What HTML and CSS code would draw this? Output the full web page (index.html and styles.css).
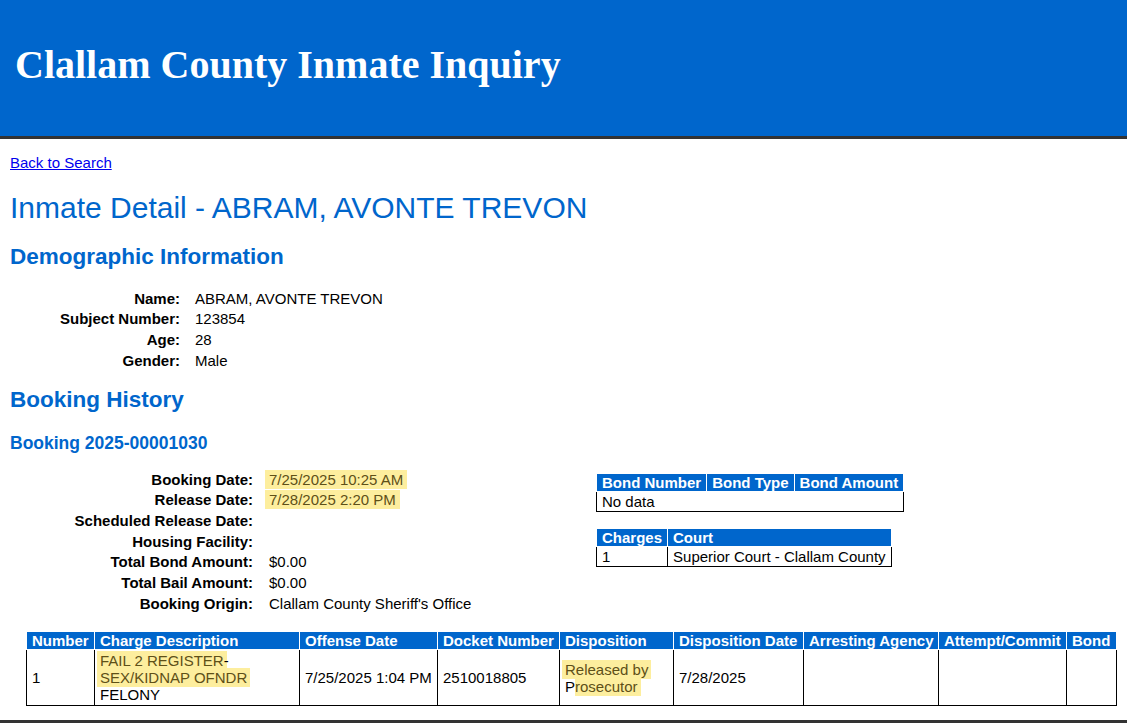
FILE: index.html
```html
<!DOCTYPE html>
<html lang="en">
<head>
    <meta charset="UTF-8">
    <meta name="viewport" content="width=device-width, initial-scale=1.0">
    <title>Clallam County Inmate Inquiry</title>
    <link rel="stylesheet" href="styles.css">
</head>
<body>
    <header class="site-header">
        <h1>Clallam County Inmate Inquiry</h1>
    </header>

    <main class="content">
        <p class="back"><a href="#">Back to Search</a></p>

        <h1 class="page-title">Inmate Detail - ABRAM, AVONTE TREVON</h1>

        <h2 class="section-title">Demographic Information</h2>
        <dl class="info info-demo">
            <dt>Name:</dt><dd>ABRAM, AVONTE TREVON</dd>
            <dt>Subject Number:</dt><dd>123854</dd>
            <dt>Age:</dt><dd>28</dd>
            <dt>Gender:</dt><dd>Male</dd>
        </dl>

        <h2 class="section-title history-title">Booking History</h2>
        <h3 class="booking-title">Booking 2025-00001030</h3>

        <div class="booking">
            <dl class="info info-booking">
                <dt>Booking Date:</dt><dd><mark class="hl">7/25/2025 10:25 AM</mark></dd>
                <dt>Release Date:</dt><dd><mark class="hl">7/28/2025 2:20 PM</mark></dd>
                <dt>Scheduled Release Date:</dt><dd></dd>
                <dt>Housing Facility:</dt><dd></dd>
                <dt>Total Bond Amount:</dt><dd>$0.00</dd>
                <dt>Total Bail Amount:</dt><dd>$0.00</dd>
                <dt>Booking Origin:</dt><dd>Clallam County Sheriff's Office</dd>
            </dl>

            <div class="booking-side">
                <table class="grid">
                    <thead>
                        <tr><th>Bond Number</th><th>Bond Type</th><th>Bond Amount</th></tr>
                    </thead>
                    <tbody>
                        <tr><td colspan="3">No data</td></tr>
                    </tbody>
                </table>

                <table class="grid court-table">
                    <thead>
                        <tr><th>Charges</th><th>Court</th></tr>
                    </thead>
                    <tbody>
                        <tr><td>1</td><td>Superior Court - Clallam County</td></tr>
                    </tbody>
                </table>
            </div>
        </div>

        <table class="grid charges">
            <thead>
                <tr>
                    <th>Number</th>
                    <th>Charge Description</th>
                    <th>Offense Date</th>
                    <th>Docket Number</th>
                    <th>Disposition</th>
                    <th>Disposition Date</th>
                    <th>Arresting Agency</th>
                    <th>Attempt/Commit</th>
                    <th>Bond</th>
                </tr>
            </thead>
            <tbody>
                <tr>
                    <td>1</td>
                    <td><mark class="hl-cell">FAIL 2 REGISTER</mark>-<br><mark class="hl-cell">SEX/KIDNAP OFNDR</mark><br>FELONY</td>
                    <td>7/25/2025 1:04 PM</td>
                    <td>2510018805</td>
                    <td><mark class="hl-cell">Released by</mark><br>P<mark class="hl-cell tail">rosecutor</mark></td>
                    <td>7/28/2025</td>
                    <td></td>
                    <td></td>
                    <td></td>
                </tr>
            </tbody>
        </table>
    </main>

    <footer class="site-footer"></footer>
</body>
</html>
```

FILE: styles.css
```css
body {
    margin: 0;
    font-family: "Liberation Sans", Arial, sans-serif;
    font-size: 15px;
    color: #000;
    background: #fff;
}

/* top banner */
.site-header {
    background-color: #0066cc;
    border-bottom: 3px solid #333;
    padding: 42px 15px 48px;
}
.site-header h1 {
    margin: 0;
    font-family: "Liberation Serif", "Times New Roman", serif;
    font-size: 40px;
    line-height: 46px;
    font-weight: bold;
    color: #fff;
}

.content {
    padding: 0 10px;
}

.back {
    margin: 15px 0 0;
    line-height: 17px;
}
.back a {
    color: #0000ee;
}

.page-title {
    margin: 20px 0 0;
    font-size: 30px;
    line-height: 34px;
    font-weight: normal;
    color: #0066cc;
}

.section-title {
    margin: 19px 0 0;
    font-size: 22.5px;
    line-height: 26px;
    color: #0066cc;
}
.history-title {
    margin-top: 15.5px;
}

.booking-title {
    margin: 20.4px 0 0;
    font-size: 17.5px;
    line-height: 20px;
    color: #0066cc;
}

/* label / value lists */
.info {
    display: grid;
    margin: 0;
    line-height: 20.67px;
}
.info dt {
    font-weight: bold;
    text-align: right;
}
.info dd {
    margin: 0;
    min-height: 20.67px;
}
.info-demo {
    margin-top: 18.5px;
    grid-template-columns: 170px 1fr;
    column-gap: 15px;
}
.info-booking {
    grid-template-columns: 243px 1fr;
    column-gap: 16px;
    width: 586px;
    flex: none;
}

.hl {
    background-color: #fdee9e;
    color: #5e5018;
    padding: 1px 4px;
    margin-left: -4px;
}

.booking {
    display: flex;
    align-items: flex-start;
    margin-top: 16.5px;
}
.booking-side {
    padding-top: 3px;
}

/* tables */
.grid {
    border-collapse: collapse;
    line-height: 17px;
}
.grid th {
    background-color: #0066cc;
    color: #fff;
    border: 1px solid #fff;
    padding: 0 5px;
    text-align: left;
    white-space: nowrap;
}
.grid td {
    border: 1px solid #000;
    padding: 1px 5px;
    text-align: left;
}
.court-table {
    margin-top: 16px;
}

.charges {
    margin: 17px 0 0 16px;
    table-layout: fixed;
    width: 1091px;
}
.charges td {
    padding: 2px 5px;
    vertical-align: middle;
}
.charges th:nth-child(1) { width: 57px; }
.charges th:nth-child(2) { width: 194px; }
.charges th:nth-child(3) { width: 127px; }
.charges th:nth-child(4) { width: 111px; }
.charges th:nth-child(5) { width: 103px; }
.charges th:nth-child(6) { width: 119px; }
.charges th:nth-child(7) { width: 124px; }
.charges th:nth-child(8) { width: 117px; }
.charges th:nth-child(9) { width: 39px; }

.hl-cell {
    background-color: #fdee9e;
    color: #5e5018;
    padding: 1px 3px;
    margin: 0 -3px;
}
.hl-cell.tail {
    margin-left: 0;
    padding-left: 0;
}

.site-footer {
    margin-top: 14px;
    border-top: 3px solid #333;
    height: 40px;
}
```
